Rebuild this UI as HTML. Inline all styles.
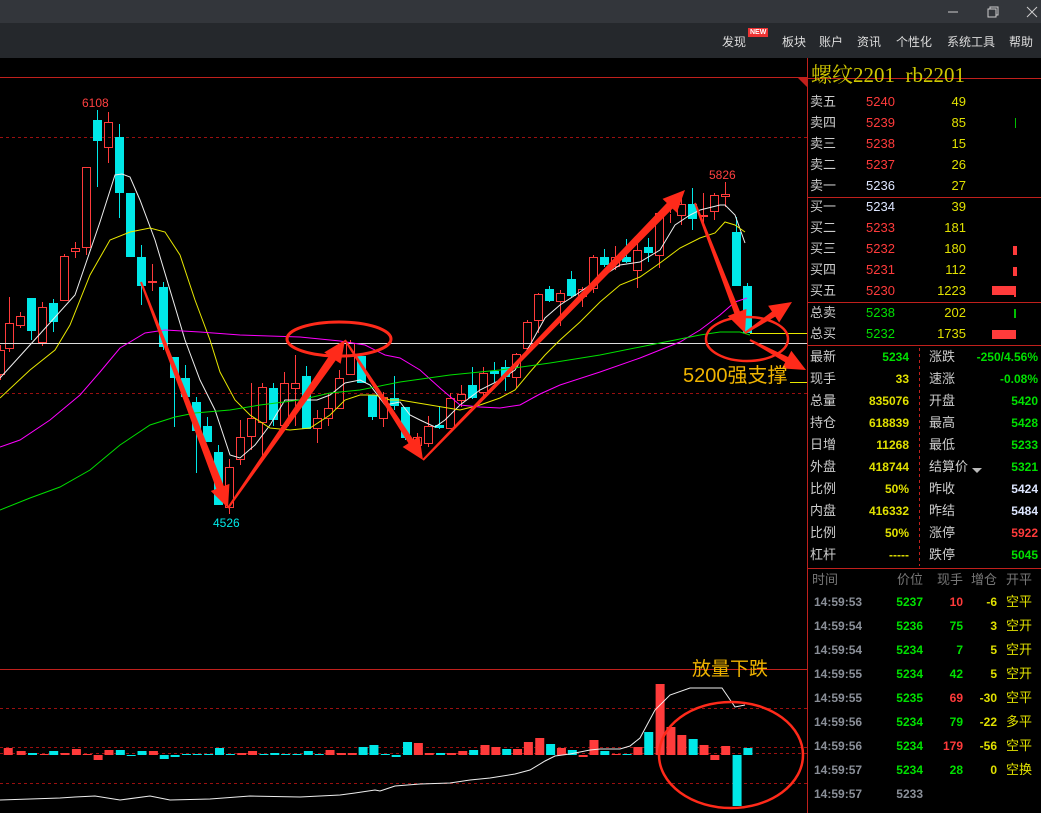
<!DOCTYPE html>
<html><head><meta charset="utf-8"><style>
*{margin:0;padding:0;box-sizing:border-box}
body{width:1041px;height:813px;background:#000;overflow:hidden;position:relative;font-family:"Liberation Sans","Noto Sans CJK SC",sans-serif}
#tb{position:absolute;left:0;top:0;width:1041px;height:23px;background:#33363b}
#mb{position:absolute;left:0;top:23px;width:1041px;height:35px;background:#25282c;color:#ddd;font-size:12px}
#mb span{position:absolute;top:10px}
.t{position:absolute;white-space:nowrap;font-size:13px;line-height:16px}
.R{color:#ff3b3b}.G{color:#00e000}.Y{color:#e0e000}.W{color:#dde6ff}.C{color:#ccc}.H{color:#777}.Q{color:#8a8f98}
.b{font-weight:bold;font-size:12px}
svg{position:absolute;left:0;top:0}
</style></head><body>
<div id="tb">
<svg width="1041" height="23" style="position:absolute"><line x1="948" y1="12" x2="958" y2="12" stroke="#ccc"/><rect x="988" y="9" width="8" height="8" fill="none" stroke="#ccc"/><path d="M990 9V7h8v8h-2" fill="none" stroke="#ccc"/><path d="M1027 7l10 10M1037 7l-10 10" stroke="#ccc"/></svg>
</div>
<div id="mb"><span style="left:722px">发现</span><span style="left:748px;top:5px;background:#e33;color:#fff;font-size:7px;font-weight:bold;padding:0 2px;line-height:9px">NEW</span><span style="left:782px">板块</span><span style="left:819px">账户</span><span style="left:857px">资讯</span><span style="left:896px">个性化</span><span style="left:947px">系统工具</span><span style="left:1009px">帮助</span></div>
<svg id="ch" width="1041" height="813"></svg>
<div class="t" style="left:811px;top:62px;font-size:21px;line-height:26px;color:#d0c800;font-family:'Liberation Serif','Noto Serif CJK SC',serif">螺纹2201&nbsp; rb2201</div>
<div id="rp"></div>
<script>
const s=document.getElementById('ch');let h='';
function L(x1,y1,x2,y2,c,d,w){h+=`<line x1="${x1}" y1="${y1}" x2="${x2}" y2="${y2}" stroke="${c}" stroke-width="${w||1}" ${d?'stroke-dasharray="'+d+'"':''}/>`}
L(0,77.5,807,77.5,'#c0201c');L(0,137.5,807,137.5,'#9a1010',"3,3");L(0,393.5,807,393.5,'#9a1010',"3,3");
L(0,669.5,807,669.5,'#c0201c');L(0,708.5,807,708.5,'#9a1010',"3,3");L(0,747.5,807,747.5,'#9a1010',"3,3");L(0,783.5,807,783.5,'#9a1010',"3,3");L(0,753.5,807,753.5,'#9a1010',"3,3");
L(807.5,58,807.5,813,'#c0201c');
L(807,78.5,1041,78.5,'#c0201c');
[197,302,345,568].forEach(y=>L(807,y+.5,1041,y+.5,'#c0201c'));
L(919.5,348,919.5,566,'#c0201c',"3,3");
h+=`<path d="M798 78h9v9z" fill="#c0201c"/>`;
const C=[[0,350,375,345,380,'r'],[9,323,349,297,352,'r'],[20,316,326,312,328,'r'],[31,298,331,298,340,'c'],[42,307,343,302,346,'r'],[53,303,322,299,332,'c'],[64,256,301,254,301,'r'],[75,248,252,242,258,'r'],[86,167,248,167,255,'r'],[97,120,141,110,187,'c'],[108,122,148,112,163,'r'],[119,137,193,124,218,'c'],[130,193,257,193,257,'c'],[141,257,286,245,305,'c'],[152,281,283,264,291,'r'],[163,287,347,282,350,'c'],[174,357,378,357,427,'c'],[185,378,397,365,400,'c'],[196,402,431,397,473,'c'],[207,426,442,417,442,'c'],[218,452,505,445,505,'c'],[229,467,508,459,514,'r'],[240,437,460,420,465,'r'],[251,418,437,383,450,'r'],[262,387,423,383,460,'r'],[273,388,420,383,426,'c'],[284,383,426,372,426,'r'],[295,383,389,355,426,'r'],[306,376,429,366,429,'c'],[317,418,429,410,443,'r'],[328,408,419,393,426,'r'],[339,378,409,370,409,'r'],[350,343,375,340,375,'r'],[361,356,383,356,383,'c'],[372,395,417,395,420,'c'],[383,397,419,392,427,'r'],[394,398,406,376,410,'c'],[405,407,438,407,440,'c'],[417,437,446,433,447,'r'],[428,426,444,416,447,'r'],[439,425,428,406,429,'c'],[450,398,429,393,429,'r'],[461,394,401,385,407,'r'],[472,385,398,367,399,'c'],[483,373,393,367,397,'r'],[494,371,374,362,382,'c'],[505,367,377,360,391,'c'],[516,354,378,353,388,'r'],[527,322,349,320,353,'r'],[538,294,321,293,333,'r'],[549,289,301,286,302,'c'],[560,293,302,290,326,'r'],[571,279,296,271,297,'c'],[582,289,297,287,307,'r'],[593,257,289,255,293,'r'],[604,257,265,249,267,'c'],[615,257,267,246,270,'r'],[626,257,262,239,263,'c'],[637,250,271,242,288,'r'],[648,247,253,238,262,'c'],[659,213,256,212,268,'r'],[670,213,214,200,223,'r'],[681,204,216,197,225,'r'],[692,204,219,188,230,'c'],[703,215,217,193,225,'r'],[714,195,212,193,220,'r'],[725,194,197,182,207,'r'],[736,232,286,217,286,'c'],[747,286,333,283,333,'c']];
C.forEach(c=>{let [x,t,b,wt,wb,k]=c;let col=k=='r'?'#ff3b3b':'#00e8e8';if(b-t<1)b=t+1;
L(x+.5,wt,x+.5,t,col);L(x+.5,b,x+.5,wb,col);
if(k=='r')h+=`<rect x="${x-3.5}" y="${t+.5}" width="8" height="${b-t-1}" fill="none" stroke="${col}"/>`;else h+=`<rect x="${x-4}" y="${t}" width="9" height="${b-t}" fill="${col}"/>`;});
function P(p,c){h+=`<polyline points="${p}" fill="none" stroke="${c}" stroke-width="1"/>`}
L(0,343.5,807,343.5,'#ddd');
P("0,378 30,345 75,295 100,222 115,175 122,174 130,177 140,200 155,240 170,290 185,340 200,380 215,410 230,455 240,458 255,445 270,425 285,400 300,400 317,400 330,395 345,383 360,380 370,385 385,405 400,402 410,415 420,420 435,427 445,420 460,405 480,390 500,380 515,370 530,345 545,318 560,305 580,292 600,278 620,265 640,262 660,250 675,225 690,215 700,210 720,205 725,205 735,215 745,243",'#eee');
P("0,398 30,370 55,350 70,325 90,275 110,240 130,232 150,228 165,232 180,255 195,300 210,340 220,372 235,400 250,415 270,428 290,430 310,428 330,415 345,400 360,395 375,395 390,400 400,400 430,405 460,410 480,405 500,398 515,390 530,372 545,355 560,340 580,322 600,302 620,285 640,277 660,263 680,248 700,238 715,233 725,222 735,225 745,232",'#e8e800');
P("0,447 20,440 50,420 80,395 100,372 120,348 145,333 165,330 200,332 240,335 300,337 340,341 365,345 385,355 400,358 420,370 440,388 460,405 480,407 500,408 520,405 540,394 560,385 600,372 640,358 680,342 700,330 720,315 735,302 747,298",'#ff00ff');
P("0,510 30,498 60,487 90,470 120,445 150,425 175,417 195,413 230,410 260,405 300,400 330,393 360,390 400,382 450,375 500,370 550,363 600,355 650,345 700,335 720,332 740,332 750,335",'#00e000');
L(750,333.5,807,333.5,'#e8e800');L(790,382.5,807,382.5,'#e8e800');
const V=[[15,7],[40,4],[62,-2],[85,1],[103,-4],[125,2],[147,6],[168,1],[189,-5],[210,5],[232,-5],[253,-1],[274,-4],[296,4],[317,-4],[338,-2],[360,-1],[381,-1],[403,-1],[424,-7],[445,-1],[467,2],[488,4],[510,-1],[531,-2],[552,-1],[574,-1],[596,-4],[617,-1],[638,5],[660,2],[681,2],[702,-8],[723,-10],[745,-1],[766,-2],[788,-13],[809,12],[830,2],[852,-2],[873,2],[895,4],[916,-5],[938,10],[959,8],[980,-6],[1001,6],[1022,13],[1044,17],[1065,-11],[1086,7],[1107,-5],[1128,-2],[1149,15],[1170,-4],[1192,1],[1213,-1],[1234,8],[1255,-23],[1277,71],[1298,28],[1319,20],[1341,-16],[1362,10],[1383,-5],[1404,9],[1426,51],[1447,-7]];
V.forEach(v=>{let x=v[0]/1.936,a=v[1];let red=a>0,hgt=Math.abs(a);let col,y;
if(v[0]==1426){col='#00e8e8';y=755;hgt=51;}
else if(v[0]==189||v[0]==1383||v[0]==1128){col='#ff3b3b';y=755;}
else if(v[0]==317||v[0]==338||v[0]==253||v[0]==766){col='#00e8e8';y=755;}
else{col=red?'#ff3b3b':'#00e8e8';y=755-hgt;}
h+=`<rect x="${x-4}" y="${y}" width="9" height="${Math.max(hgt,1)}" fill="${col}"/>`;});
P("0,800 60,798 75,797 95,796 120,800 150,796 170,800 210,799 250,796 300,797 340,795 355,793 375,790 380,791 395,786 420,784 450,783 470,780 490,778 515,774 530,770 545,761 555,756 570,754 590,750 600,749 620,749 630,746 640,738 655,710 670,695 690,688 710,688 722,688 735,707 745,705",'#eee');
function A(x1,y1,x2,y2,w){const dx=x2-x1,dy=y2-y1,l=Math.hypot(dx,dy),ux=dx/l,uy=dy/l,nx=-uy,ny=ux;const hl=22,hw=10;const bx=x2-ux*hl,by=y2-uy*hl;
h+=`<polygon points="${x1+nx*1},${y1+ny*1} ${bx+nx*w},${by+ny*w} ${bx+nx*hw},${by+ny*hw} ${x2},${y2} ${bx-nx*hw},${by-ny*hw} ${bx-nx*w},${by-ny*w} ${x1-nx*1},${y1-ny*1}" fill="#ff2a1a"/>`}
A(141,282,228,508,4);A(228,508,345,340,4);A(345,340,423,460,3);A(423,460,685,190,4);A(695,203,745,333,3);A(745,333,792,302,3);A(750,340,806,370,3);
h+=`<ellipse cx="339" cy="339" rx="52" ry="17" fill="none" stroke="#ff2a1a" stroke-width="3"/>`;
h+=`<ellipse cx="747" cy="339" rx="41" ry="22" fill="none" stroke="#ff2a1a" stroke-width="2.5"/>`;
h+=`<ellipse cx="731" cy="755" rx="72" ry="53" fill="none" stroke="#ff2a1a" stroke-width="2.5"/>`;
h+=`<text x="82" y="107" fill="#ff4040" font-size="12">6108</text><text x="213" y="527" fill="#00e8e8" font-size="12">4526</text><text x="709" y="179" fill="#ff4040" font-size="12">5826</text>`;
h+=`<text x="683" y="382" fill="#f0b400" font-size="20" font-family="Liberation Sans,Noto Sans CJK SC,sans-serif">5200强支撑</text>`;
h+=`<text x="692" y="675" fill="#f0b400" font-size="19" font-family="Liberation Sans,Noto Sans CJK SC,sans-serif">放量下跌</text>`;
[[1015,118,1,10,'#00c000'],[1013,246,4,9,'#ff3b3b'],[1013,267,4,9,'#ff3b3b'],[1014,288,2,9,'#ff3b3b'],[992,286,24,9,'#ff3b3b'],[1014,309,2,9,'#00c000'],[992,330,24,9,'#ff3b3b']].forEach(b=>{h+=`<rect x="${b[0]}" y="${b[1]}" width="${b[2]}" height="${b[3]}" fill="${b[4]}"/>`});
h+=`<path d="M972 468h10l-5 5z" fill="#bbb"/>`;
s.innerHTML=h;
let r='';
function T(x,y,t,c,ex,al){r+=`<div class="t ${c} ${ex||''}" style="${al?'right:'+(1041-x)+'px':'left:'+x+'px'};top:${y-8}px">${t}</div>`}
const ob=[['卖五','5240','49','R'],['卖四','5239','85','R'],['卖三','5238','15','R'],['卖二','5237','26','R'],['卖一','5236','27','W'],['买一','5234','39','W'],['买二','5233','181','R'],['买三','5232','180','R'],['买四','5231','112','R'],['买五','5230','1223','R'],['总卖','5238','202','G'],['总买','5232','1735','G']];
const oy=[102,123,144,165,186,207,228,249,270,291,313,334];
ob.forEach((o,i)=>{T(810,oy[i],o[0],'C');T(866,oy[i],o[1],o[3],'',0);T(966,oy[i],o[2],'Y','',1)});
const inf=[['最新','5234','G','涨跌','-250/4.56%','G'],['现手','33','Y','速涨','-0.08%','G'],['总量','835076','Y','开盘','5420','G'],['持仓','618839','Y','最高','5428','G'],['日增','11268','Y','最低','5233','G'],['外盘','418744','Y','结算价','5321','G'],['比例','50%','Y','昨收','5424','W'],['内盘','416332','Y','昨结','5484','W'],['比例','50%','Y','涨停','5922','R'],['杠杆','-----','Y','跌停','5045','G']];
inf.forEach((o,i)=>{let y=357+i*22;T(810,y,o[0],'C');T(909,y,o[1],o[2],'b',1);T(929,y,o[3],'C');T(1038,y,o[4],o[5],'b',1)});
T(812,580,'时间','H','',0);T(923,580,'价位','H','',1);T(963,580,'现手','H','',1);T(997,580,'增仓','H','',1);T(1006,580,'开平','H','',0);
const tr=[['14:59:53','5237','10','R','-6','空平'],['14:59:54','5236','75','G','3','空开'],['14:59:54','5234','7','G','5','空开'],['14:59:55','5234','42','G','5','空开'],['14:59:55','5235','69','R','-30','空平'],['14:59:56','5234','79','G','-22','多平'],['14:59:56','5234','179','R','-56','空平'],['14:59:57','5234','28','G','0','空换'],['14:59:57','5233','','','','']];
tr.forEach((o,i)=>{let y=602+i*24;T(814,y,o[0],'Q','b',0);T(923,y,o[1],i==8?'Q':'G','b',1);if(o[2]){T(963,y,o[2],o[3],'b',1);T(997,y,o[4],'Y','b',1);T(1006,y,o[5],'Y','',0)}});
document.getElementById('rp').innerHTML=r;
</script>
</body></html>
